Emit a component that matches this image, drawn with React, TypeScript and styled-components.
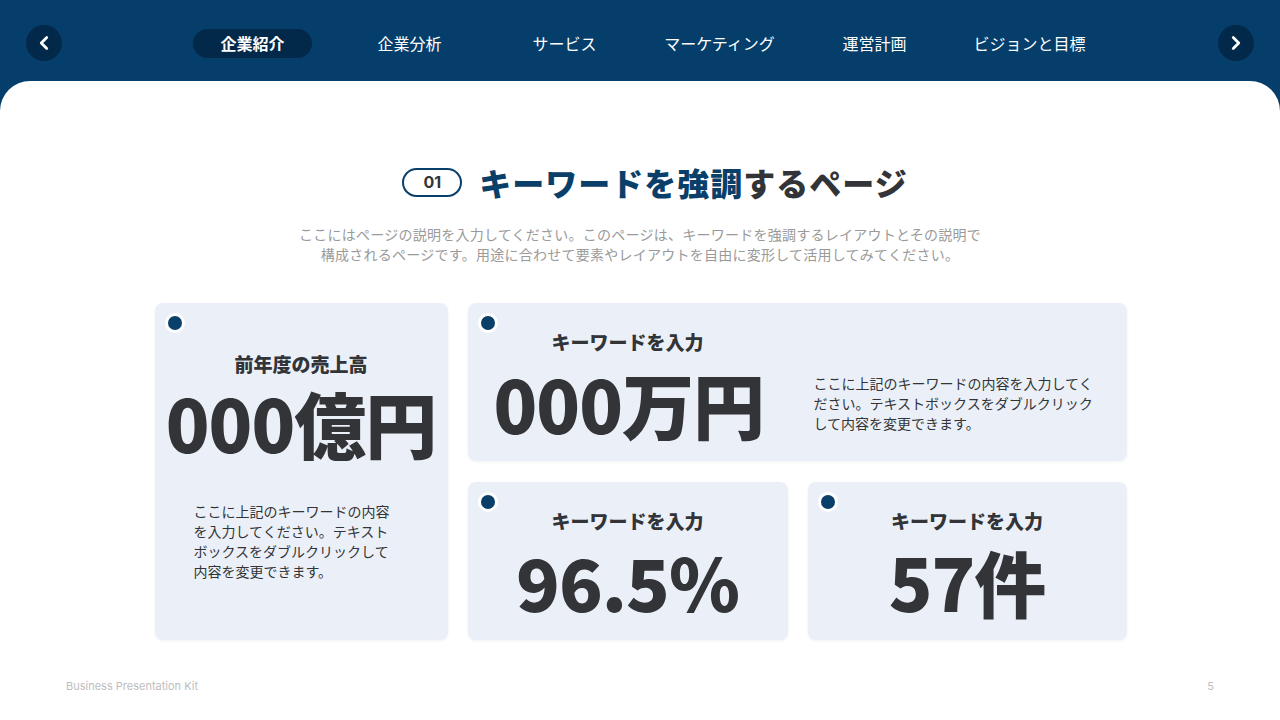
import React from "react";
import styled, { createGlobalStyle } from "styled-components";
import { ChevronLeft, ChevronRight } from "lucide-react";

const Global = createGlobalStyle`
  * { box-sizing: border-box; }
  html, body { margin: 0; padding: 0; }
  body {
    width: 1280px;
    height: 720px;
    overflow: hidden;
    background: #053e6a;
    font-family: "Noto Sans CJK JP", "Noto Sans", sans-serif;
    color: #323437;
  }
`;

const Page = styled.div`
  width: 1280px;
  height: 720px;
  display: flex;
  flex-direction: column;
  background: #053e6a;
`;

const Header = styled.header`
  height: 81px;
  flex: none;
  display: flex;
  align-items: center;
  justify-content: space-between;
  padding: 0 26px;
`;

const NavButton = styled.button`
  width: 36px;
  height: 36px;
  border-radius: 50%;
  border: none;
  background: #03294a;
  color: #fff;
  display: flex;
  align-items: center;
  justify-content: center;
  padding: 0;
  margin-top: 5px;
`;

const Tabs = styled.nav`
  display: flex;
  margin-top: 5px;
  padding-left: 4px;
`;

const Tab = styled.div<{ $first?: boolean }>`
  width: 155px;
  flex: none;
  display: flex;
  justify-content: center;
  margin-left: ${(p) => (p.$first ? "-2px" : "0")};
  margin-right: ${(p) => (p.$first ? "2px" : "0")};
`;

const TabLabel = styled.span<{ $active?: boolean }>`
  display: inline-flex;
  align-items: center;
  justify-content: center;
  height: 29px;
  padding: 0 27px;
  border-radius: 15px;
  font-size: 16px;
  white-space: nowrap;
  color: #fff;
  font-weight: ${(p) => (p.$active ? 700 : 400)};
  background: ${(p) => (p.$active ? "#03294a" : "transparent")};
`;

const Panel = styled.main`
  flex: 1;
  background: #fff;
  border-radius: 30px 30px 0 0;
  display: flex;
  flex-direction: column;
  align-items: center;
  padding-top: 79px;
  position: relative;
`;

const TitleRow = styled.div`
  display: flex;
  align-items: center;
  gap: 17px;
  height: 44px;
  margin-left: 30px;
`;

const Num = styled.div`
  width: 60px;
  height: 29px;
  border: 2px solid #0a3f6a;
  border-radius: 15px;
  display: flex;
  align-items: center;
  justify-content: center;
  font-family: "Inter", "Noto Sans", sans-serif;
  font-weight: 700;
  font-size: 16px;
  color: #323437;
`;

const Title = styled.h1`
  margin: 0;
  font-size: 32px;
  font-weight: 900;
  letter-spacing: 1px;
  line-height: 44px;
  color: #323437;
`;

const Accent = styled.span`
  color: #0a3f6a;
`;

const Lead = styled.p`
  margin: 20px 0 0;
  font-size: 14px;
  line-height: 20px;
  letter-spacing: 0.25px;
  color: #9a9a9a;
  text-align: center;
`;

const Grid = styled.div`
  margin-top: 39px;
  display: grid;
  grid-template-columns: 293px 320px 319px;
  grid-template-rows: 158px 158px;
  column-gap: 20px;
  row-gap: 21px;
  margin-left: 1px;
`;

const Card = styled.section<{ $area: string }>`
  grid-area: ${(p) => p.$area};
  position: relative;
  background: #ebf0f8;
  border-radius: 8px;
  box-shadow: 0 1px 3px rgba(20, 40, 70, 0.06);
`;

const Dot = styled.span`
  position: absolute;
  top: 10px;
  left: 10px;
  width: 20px;
  height: 20px;
  border-radius: 50%;
  border: 3px solid #fff;
  background: #0a3f6a;
`;

const Label = styled.div`
  font-size: 19px;
  font-weight: 900;
  line-height: 28px;
  color: #323437;
  text-align: center;
`;

const Big = styled.div`
  font-size: 72px;
  font-weight: 900;
  line-height: 72px;
  letter-spacing: -1px;
  color: #323437;
  text-align: center;
  white-space: nowrap;
`;

const Body = styled.p<{ $width: number }>`
  margin: 0;
  width: ${(p) => p.$width}px;
  font-size: 14px;
  line-height: 20px;
  color: #323437;
`;

const TallInner = styled.div`
  display: flex;
  flex-direction: column;
  align-items: center;
  padding-top: 47px;
  height: 100%;
`;

const TallBig = styled(Big)`
  margin-top: 8px;
`;

const TallBody = styled(Body)`
  align-self: flex-start;
  margin: 43px 0 0 39px;
`;

const WideInner = styled.div`
  display: grid;
  grid-template-columns: 268px 284px;
  grid-template-rows: 28px 72px;
  column-gap: 52px;
  row-gap: 11px;
  padding: 25px 0 0 26px;
`;

const WideLabel = styled(Label)`
  grid-column: 1;
  grid-row: 1;
`;

const WideBig = styled(Big)`
  grid-column: 1;
  grid-row: 2;
`;

const WideBody = styled(Body)`
  grid-column: 2;
  grid-row: 2;
  align-self: center;
  margin-top: 0;
`;

const SmallInner = styled.div`
  display: flex;
  flex-direction: column;
  align-items: center;
  padding-top: 25px;
  gap: 10px;
`;

const Footer = styled.footer`
  position: absolute;
  left: 66px;
  right: 66px;
  bottom: 27px;
  display: flex;
  justify-content: space-between;
  font-family: "Inter", "Noto Sans", sans-serif;
  font-size: 11px;
  color: #bdbdbd;
  line-height: 14px;
`;

const tabs = ["企業紹介", "企業分析", "サービス", "マーケティング", "運営計画", "ビジョンと目標"];

export default function App() {
  return (
    <>
      <Global />
      <Page>
        <Header>
          <NavButton aria-label="前へ">
            <ChevronLeft size={22} strokeWidth={3} />
          </NavButton>
          <Tabs>
            {tabs.map((t, i) => (
              <Tab key={t} $first={i === 0}>
                <TabLabel $active={i === 0}>{t}</TabLabel>
              </Tab>
            ))}
          </Tabs>
          <NavButton aria-label="次へ">
            <ChevronRight size={22} strokeWidth={3} />
          </NavButton>
        </Header>
        <Panel>
          <TitleRow>
            <Num>01</Num>
            <Title>
              <Accent>キーワードを強調</Accent>するページ
            </Title>
          </TitleRow>
          <Lead>
            ここにはページの説明を入力してください。このページは、キーワードを強調するレイアウトとその説明で
            <br />
            構成されるページです。用途に合わせて要素やレイアウトを自由に変形して活用してみてください。
          </Lead>
          <Grid>
            <Card $area="1 / 1 / 3 / 2">
              <Dot />
              <TallInner>
                <Label>前年度の売上高</Label>
                <TallBig>000億円</TallBig>
                <TallBody $width={200}>
                  ここに上記のキーワードの内容を入力してください。テキストボックスをダブルクリックして内容を変更できます。
                </TallBody>
              </TallInner>
            </Card>
            <Card $area="1 / 2 / 2 / 4">
              <Dot />
              <WideInner>
                <WideLabel>キーワードを入力</WideLabel>
                <WideBig>000万円</WideBig>
                <WideBody $width={284}>
                  ここに上記のキーワードの内容を入力してください。テキストボックスをダブルクリックして内容を変更できます。
                </WideBody>
              </WideInner>
            </Card>
            <Card $area="2 / 2 / 3 / 3">
              <Dot />
              <SmallInner>
                <Label>キーワードを入力</Label>
                <Big>96.5%</Big>
              </SmallInner>
            </Card>
            <Card $area="2 / 3 / 3 / 4">
              <Dot />
              <SmallInner>
                <Label>キーワードを入力</Label>
                <Big>57件</Big>
              </SmallInner>
            </Card>
          </Grid>
          <Footer>
            <span>Business Presentation Kit</span>
            <span>5</span>
          </Footer>
        </Panel>
      </Page>
    </>
  );
}
